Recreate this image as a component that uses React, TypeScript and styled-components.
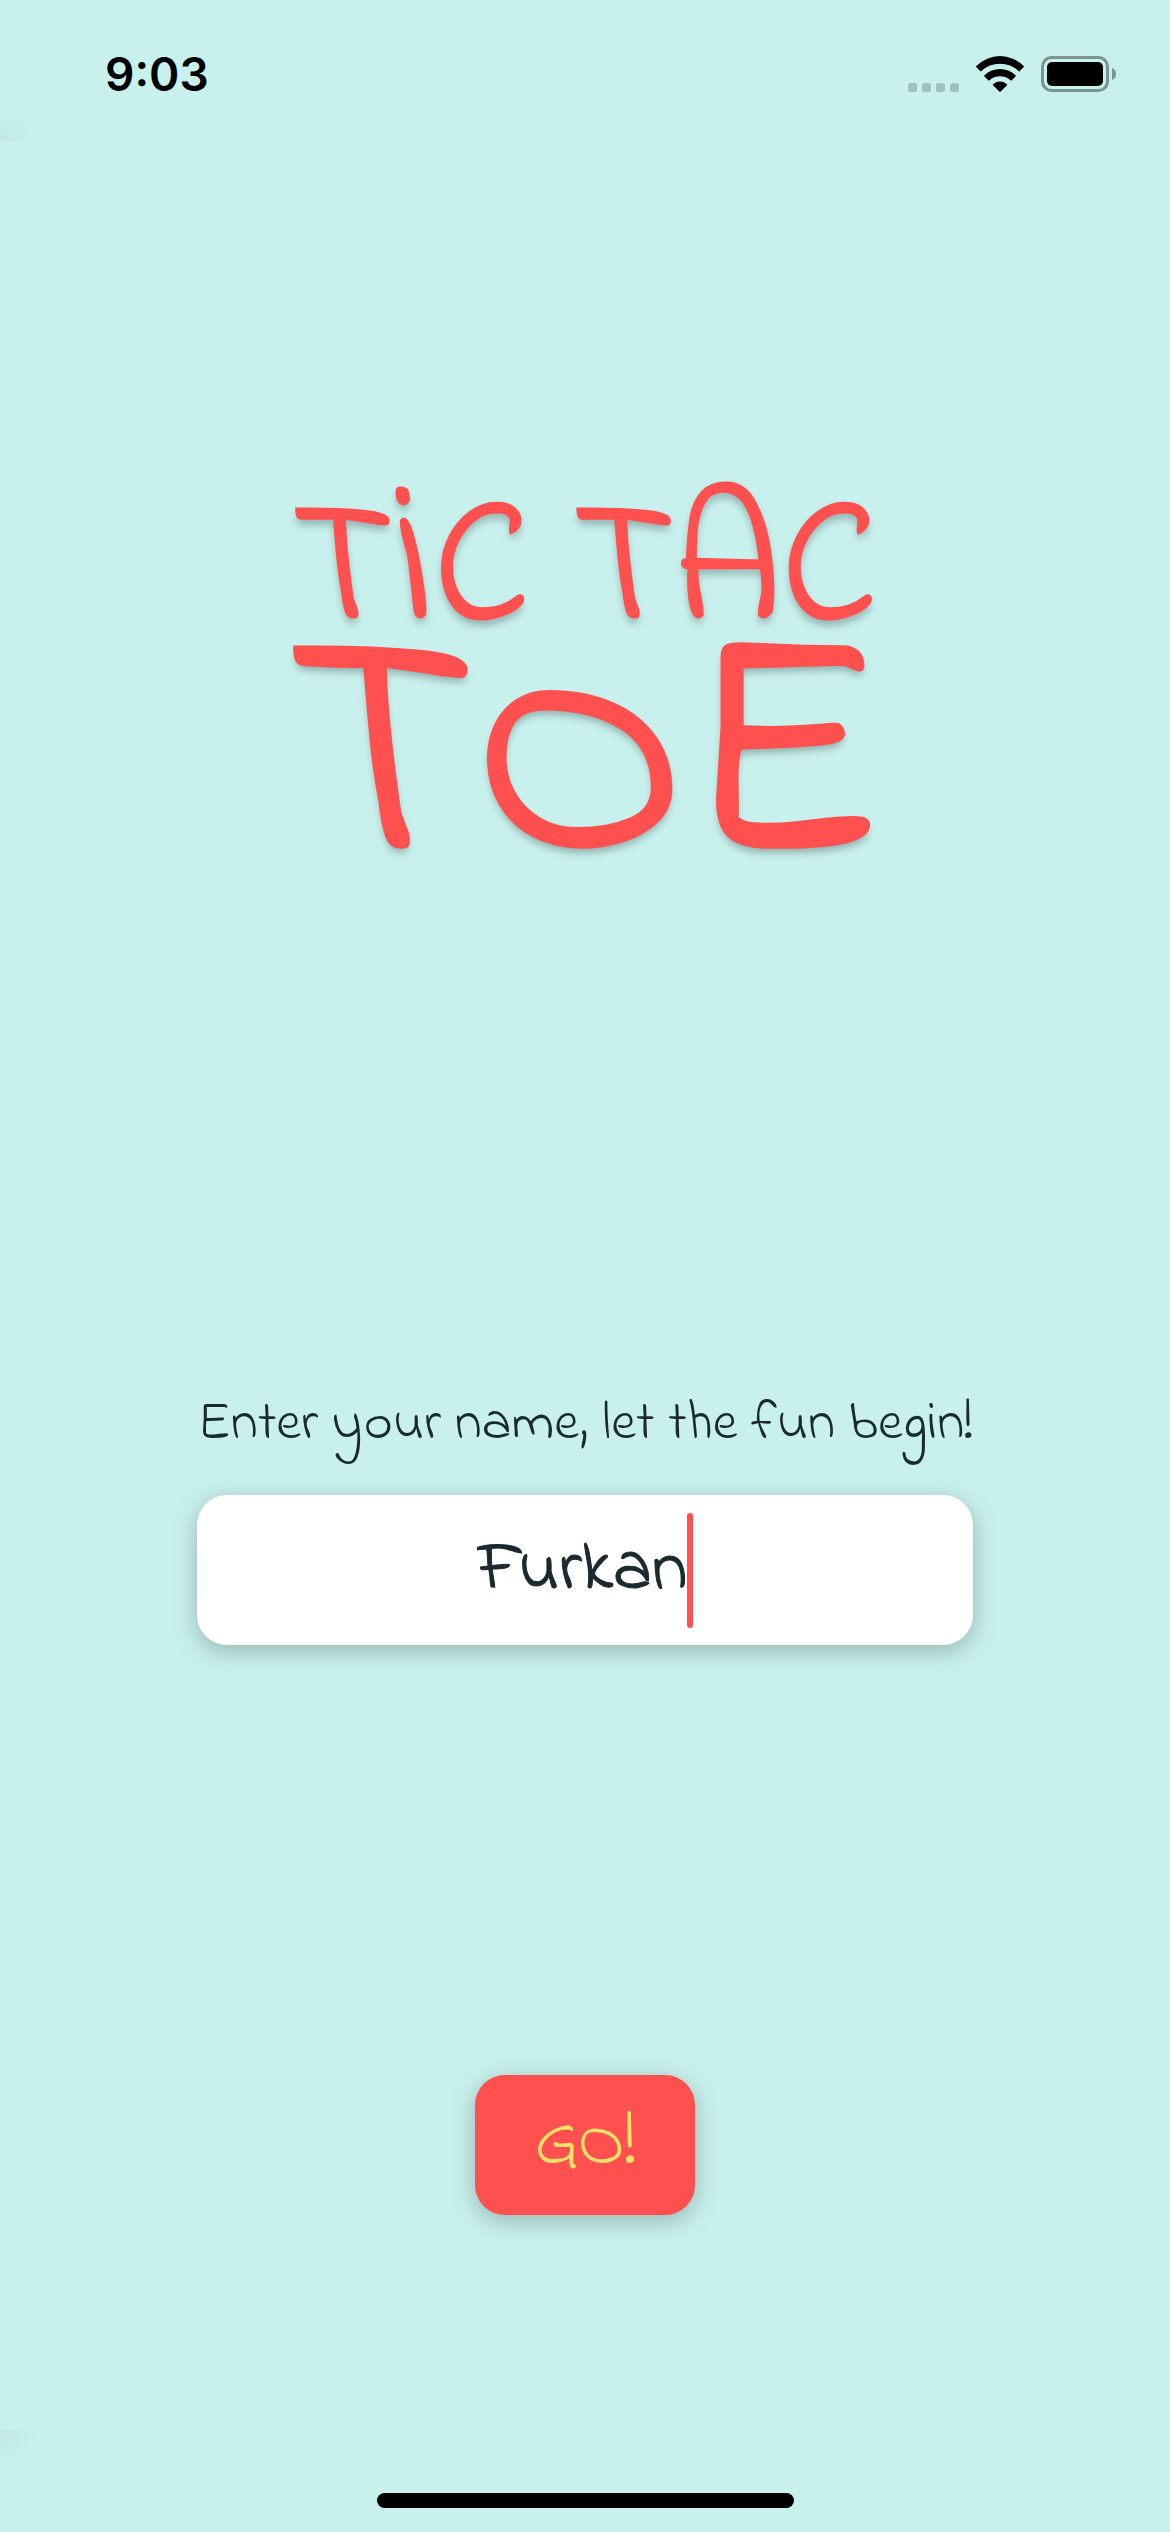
import React, { useState } from "react";
import styled, { createGlobalStyle } from "styled-components";

const colors = {
  mint: "#c8f1ee",
  coral: "#ff5050",
  ink: "#1a2930",
  yellow: "#ffe066",
};

const GlobalStyle = createGlobalStyle`
  *, *::before, *::after { box-sizing: border-box; }
  body {
    margin: 0;
    background: ${colors.mint};
    color: ${colors.ink};
    font-family: "Indie Flower", Lato, "Open Sans", sans-serif;
  }
`;

const Screen = styled.div`
  display: flex;
  flex-direction: column;
  min-height: 100vh;
`;

const StatusBar = styled.header`
  display: flex;
  align-items: center;
  justify-content: space-between;
  height: 141px;
  padding: 6px 54px 0 105px;
  background: radial-gradient(36px 30px at 0 100%, rgba(0, 0, 0, 0.04), transparent);
  color: #000;
`;

const Clock = styled.time`
  font: 600 46px/60px Inter, sans-serif;
`;

const StatusIcons = styled.div`
  display: flex;
  align-items: center;
  gap: 17px;
`;

const Content = styled.main`
  display: flex;
  flex: 1;
  flex-direction: column;
  align-items: center;
  padding: 354px 24px 0;
`;

const Title = styled.h1`
  margin: 0;
  color: ${colors.coral};
  font-weight: 400;
  text-align: center;
  text-shadow: 0 6px 8px rgba(0, 0, 0, 0.3);
`;

const TitleLine = styled.span<{ $large?: boolean }>`
  display: block;
  font-size: ${(p) => (p.$large ? 324 : 175)}px;
  line-height: ${(p) => (p.$large ? 226 : 160)}px;
  white-space: nowrap;
  -webkit-text-stroke: ${(p) => (p.$large ? 5 : 3)}px ${colors.coral};
`;

const NameForm = styled.form`
  display: flex;
  flex-direction: column;
  align-items: center;
  width: 100%;
  margin-top: 514px;
`;

const Prompt = styled.label`
  font-size: 55px;
  line-height: 60px;
  white-space: nowrap;
`;

const NameField = styled.div`
  display: flex;
  align-items: center;
  justify-content: center;
  width: 100%;
  max-width: 776px;
  height: 150px;
  margin-top: 40px;
  border-radius: 30px;
  background: #fff;
  box-shadow: 0 6px 24px rgba(0, 0, 0, 0.25);
`;

const NameInput = styled.input`
  field-sizing: content;
  max-width: 100%;
  height: 115px;
  padding: 0;
  border: 0;
  outline: 0;
  background: transparent;
  color: ${colors.ink};
  caret-color: transparent;
  font: inherit;
  font-size: 72px;
  -webkit-text-stroke: 1px ${colors.ink};
`;

const Caret = styled.span`
  width: 6px;
  height: 115px;
  border-radius: 3px;
  background: ${colors.coral};
`;

const GoButton = styled.button`
  width: 220px;
  height: 140px;
  margin-top: 430px;
  padding: 0;
  border: 0;
  border-radius: 30px;
  background: ${colors.coral};
  box-shadow: 0 6px 24px rgba(0, 0, 0, 0.25);
  color: ${colors.yellow};
  font: inherit;
  font-size: 72px;
`;

const HomeArea = styled.footer`
  display: flex;
  align-items: flex-end;
  justify-content: center;
  height: 102px;
  padding-bottom: 24px;
  background: radial-gradient(38px 36px at 0 0, rgba(0, 0, 0, 0.04), transparent);
`;

const HomeIndicator = styled.div`
  width: 417px;
  height: 15px;
  border-radius: 8px;
  background: #000;
`;

const SignalIcon = () => (
  <svg width="51" height="36" viewBox="0 0 51 36" fill="#a0c1be" aria-hidden="true">
    {[0, 14, 28, 42].map((x) => (
      <rect key={x} x={x} y="27" width="9" height="9" rx="2.5" />
    ))}
  </svg>
);

const WifiIcon = () => (
  <svg width="48" height="36" viewBox="0 0 48 36" aria-hidden="true">
    <path d="M.4 10a33 33 0 0 1 47.2 0q.6.7 0 1.3l-3.7 3.8q-.6.6-1.3 0a27 27 0 0 0-37.2 0q-.7.6-1.3 0L.4 11.3q-.6-.6 0-1.3Z" />
    <path d="M8.5 19.2a22.5 22.5 0 0 1 31 0q.7.7 0 1.3l-3.7 3.8q-.7.6-1.3 0a15.5 15.5 0 0 0-21 0q-.7.6-1.3 0l-3.7-3.8q-.7-.6 0-1.3Z" />
    <path d="M17.3 28a10.5 10.5 0 0 1 13.4 0q.7.7 0 1.4l-6 6.1q-.7.7-1.4 0l-6-6.1q-.7-.7 0-1.4Z" />
  </svg>
);

const BatteryIcon = () => (
  <svg width="75" height="36" viewBox="0 0 75 36" aria-hidden="true">
    <rect x="1.5" y="1.5" width="65" height="33" rx="9" fill="none" stroke="#7b9391" strokeWidth="3" />
    <rect x="6" y="6" width="56" height="24" rx="5" />
    <path d="M71 12a6.5 6.5 0 0 1 0 12Z" fill="#7b9391" />
  </svg>
);

export default function App() {
  const [name, setName] = useState("Furkan");

  return (
    <Screen>
      <GlobalStyle />
      <StatusBar>
        <Clock>9:03</Clock>
        <StatusIcons>
          <SignalIcon />
          <WifiIcon />
          <BatteryIcon />
        </StatusIcons>
      </StatusBar>
      <Content>
        <Title>
          <TitleLine>TİC TAC</TitleLine>
          <TitleLine $large>TOE</TitleLine>
        </Title>
        <NameForm onSubmit={(event) => event.preventDefault()}>
          <Prompt htmlFor="player-name">Enter your name, let the fun begin!</Prompt>
          <NameField>
            <NameInput
              id="player-name"
              type="text"
              autoComplete="off"
              value={name}
              onChange={(event) => setName(event.target.value)}
            />
            <Caret />
          </NameField>
          <GoButton type="submit">GO!</GoButton>
        </NameForm>
      </Content>
      <HomeArea>
        <HomeIndicator />
      </HomeArea>
    </Screen>
  );
}
